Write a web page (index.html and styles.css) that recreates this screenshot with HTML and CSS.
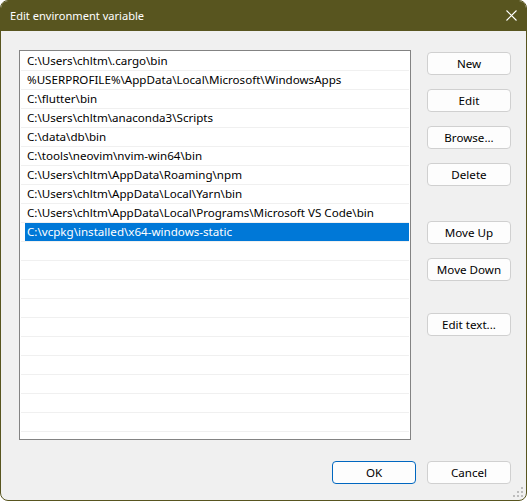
FILE: index.html
```html
<!DOCTYPE html>
<html>
<head>
<meta charset="utf-8">
<link rel="stylesheet" href="styles.css">
</head>
<body>
<div class="window">
  <div class="titlebar">
    <span class="title">Edit environment variable</span>
    <svg class="close" width="11" height="11" viewBox="0 0 11 11"><path d="M0.5 0.5 L10.5 10.5 M10.5 0.5 L0.5 10.5" stroke="#ffffff" stroke-width="1.1" fill="none"/></svg>
  </div>
  <div class="content">
    <div class="main">
      <div class="listbox">
        <div class="row"><span class="cell">C:\Users\chltm\.cargo\bin</span></div>
        <div class="row"><span class="cell">%USERPROFILE%\AppData\Local\Microsoft\WindowsApps</span></div>
        <div class="row"><span class="cell">C:\flutter\bin</span></div>
        <div class="row"><span class="cell">C:\Users\chltm\anaconda3\Scripts</span></div>
        <div class="row"><span class="cell">C:\data\db\bin</span></div>
        <div class="row"><span class="cell">C:\tools\neovim\nvim-win64\bin</span></div>
        <div class="row"><span class="cell">C:\Users\chltm\AppData\Roaming\npm</span></div>
        <div class="row"><span class="cell">C:\Users\chltm\AppData\Local\Yarn\bin</span></div>
        <div class="row"><span class="cell">C:\Users\chltm\AppData\Local\Programs\Microsoft VS Code\bin</span></div>
        <div class="row selected"><span class="cell">C:\vcpkg\installed\x64-windows-static</span></div>
        <div class="row"><span class="cell"></span></div>
        <div class="row"><span class="cell"></span></div>
        <div class="row"><span class="cell"></span></div>
        <div class="row"><span class="cell"></span></div>
        <div class="row"><span class="cell"></span></div>
        <div class="row"><span class="cell"></span></div>
        <div class="row"><span class="cell"></span></div>
        <div class="row"><span class="cell"></span></div>
        <div class="row"><span class="cell"></span></div>
        <div class="row"><span class="cell"></span></div>
        <div class="row"><span class="cell"></span></div>
      </div>
      <div class="side">
        <button class="btn">New</button>
        <button class="btn">Edit</button>
        <button class="btn">Browse...</button>
        <button class="btn">Delete</button>
        <button class="btn gap-lg">Move Up</button>
        <button class="btn">Move Down</button>
        <button class="btn gap-md">Edit text...</button>
      </div>
    </div>
    <div class="footer">
      <button class="btn default">OK</button>
      <button class="btn">Cancel</button>
    </div>
  </div>
  <svg class="grip" width="10" height="10" viewBox="0 0 10 10">
    <g fill="#bdbdbd">
      <rect x="8" y="0" width="2" height="2"/>
      <rect x="4" y="4" width="2" height="2"/><rect x="8" y="4" width="2" height="2"/>
      <rect x="0" y="8" width="2" height="2"/><rect x="4" y="8" width="2" height="2"/><rect x="8" y="8" width="2" height="2"/>
    </g>
  </svg>
</div>
</body>
</html>
```

FILE: styles.css
```css
* { box-sizing: border-box; }
html, body { margin: 0; padding: 0; background: #ffffff; }
body {
  font-family: "Noto Sans", "Open Sans", sans-serif;
  font-size: 11.6px;
  color: #000;
}
.window {
  position: relative;
  width: 527px;
  height: 501px;
  border: 1px solid #58551f;
  border-radius: 8px;
  background: #f0f0f0;
  overflow: hidden;
  display: flex;
  flex-direction: column;
}
.titlebar {
  height: 30px;
  background: #58551f;
  display: flex;
  align-items: center;
  justify-content: space-between;
  padding: 0 9px 0 9px;
  color: #ffffff;
  flex: none;
}
.title { font-size: 11.1px; line-height: 16px; }
.close { display: block; margin-top: -1px; }
.content {
  flex: 1;
  display: flex;
  flex-direction: column;
  padding: 19px 15px 0 18px;
}
.main { display: flex; gap: 16px; }
.listbox {
  width: 392px;
  height: 390px;
  border: 1px solid #838383;
  background: #ffffff;
  overflow: hidden;
  padding: 1px 1px 0 1px;
}
.row {
  height: 19px;
  border-bottom: 1px solid #f0f0f0;
  display: flex;
}
.cell {
  flex: 1;
  margin-left: 4px;
  padding-left: 2px;
  line-height: 18px;
  white-space: nowrap;
}
.selected .cell { background: #0078d7; color: #ffffff; }
.side {
  display: flex;
  flex-direction: column;
  gap: 14px;
  padding-top: 2px;
  width: 84px;
}
.btn {
  width: 84px;
  height: 23px;
  background: #fdfdfd;
  border: 1px solid #d0d0d0;
  border-radius: 4px;
  font-family: inherit;
  font-size: 11.6px;
  color: #000;
  padding: 0;
  line-height: 20px;
}
.gap-lg { margin-top: 21px; }
.gap-md { margin-top: 18px; }
.btn.default { border-color: #0067c0; }
.footer {
  display: flex;
  justify-content: flex-end;
  gap: 11px;
  margin-top: 21px;
}
.grip { position: absolute; right: 3px; bottom: 3px; }
```
